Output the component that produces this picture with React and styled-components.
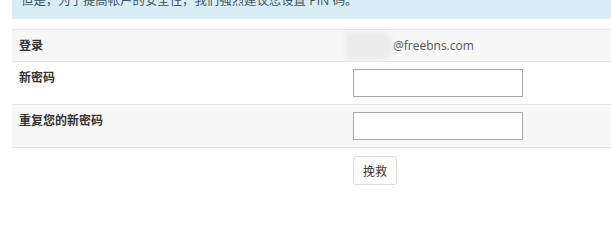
import styled, { createGlobalStyle } from "styled-components";

const GlobalStyle = createGlobalStyle`
  html, body {
    margin: 0;
    padding: 0;
    background: #fff;
    overflow: hidden;
  }
  body {
    font-family: "Open Sans", "Noto Sans CJK SC", sans-serif;
    font-size: 12px;
    color: #333;
  }
`;

const Page = styled.div`
  padding-left: 12px;
  width: 611px;
  box-sizing: border-box;
`;

const Alert = styled.div`
  margin-top: -8px;
  padding: 0 9px 9px;
  background: #d9edf7;
  color: #3c5566;
  font-size: 12.4px;
  line-height: 18px;
  white-space: nowrap;
`;

const Table = styled.div`
  margin-top: 10px;
  border-top: 1px solid #e6e6e6;
`;

const Row = styled.div`
  display: grid;
  grid-template-columns: 333px 1fr;
  background: ${(p) => (p.$striped ? "#f7f7f7" : "#fff")};
  border-bottom: 1px solid #e6e6e6;
`;

const Cell = styled.div`
  padding: 7px 8px;
  line-height: 17px;
  display: flex;
  align-items: center;
  min-height: 17px;
`;

const Label = styled(Cell)`
  align-items: flex-start;
  padding-left: 7px;
  font-weight: bold;
  color: #333;
`;

const Email = styled.span`
  display: inline-flex;
  align-items: center;
  color: #555;
`;

const Redacted = styled.span`
  display: inline-block;
  width: 47px;
  height: 28px;
  margin: -6px 0 -6px -7px;
  background: #ebebeb;
  border-radius: 0 14px 14px 0;
  filter: blur(2px);
`;

const Input = styled.input`
  width: 170px;
  height: 28px;
  box-sizing: border-box;
  border: 1px solid #a8a8a8;
  background: #fff;
  margin: 0;
  padding: 2px 6px;
  font: inherit;
`;

const Actions = styled.div`
  padding: 8px 0 0 341px;
`;

const Button = styled.button`
  width: 44px;
  height: 29px;
  box-sizing: border-box;
  background: #fff;
  border: 1px solid #dcdcdc;
  border-radius: 3px;
  font-family: "Open Sans", "Noto Sans CJK SC", sans-serif;
  font-size: 12px;
  color: #333;
  padding: 0;
`;

const rows = [
  { label: "登录", type: "email" },
  { label: "新密码", type: "input" },
  { label: "重复您的新密码", type: "input" },
];

export default function App() {
  return (
    <>
      <GlobalStyle />
      <Page>
        <Alert>但是，为了提高帐户的安全性，我们强烈建议您设置 PIN 码。</Alert>
        <Table>
          {rows.map((row, idx) => (
            <Row key={row.label} $striped={idx % 2 === 0}>
              <Label>{row.label}</Label>
              <Cell>
                {row.type === "email" ? (
                  <Email>
                    <Redacted />
                    @freebns.com
                  </Email>
                ) : (
                  <Input type="password" />
                )}
              </Cell>
            </Row>
          ))}
        </Table>
        <Actions>
          <Button type="button">挽救</Button>
        </Actions>
      </Page>
    </>
  );
}
